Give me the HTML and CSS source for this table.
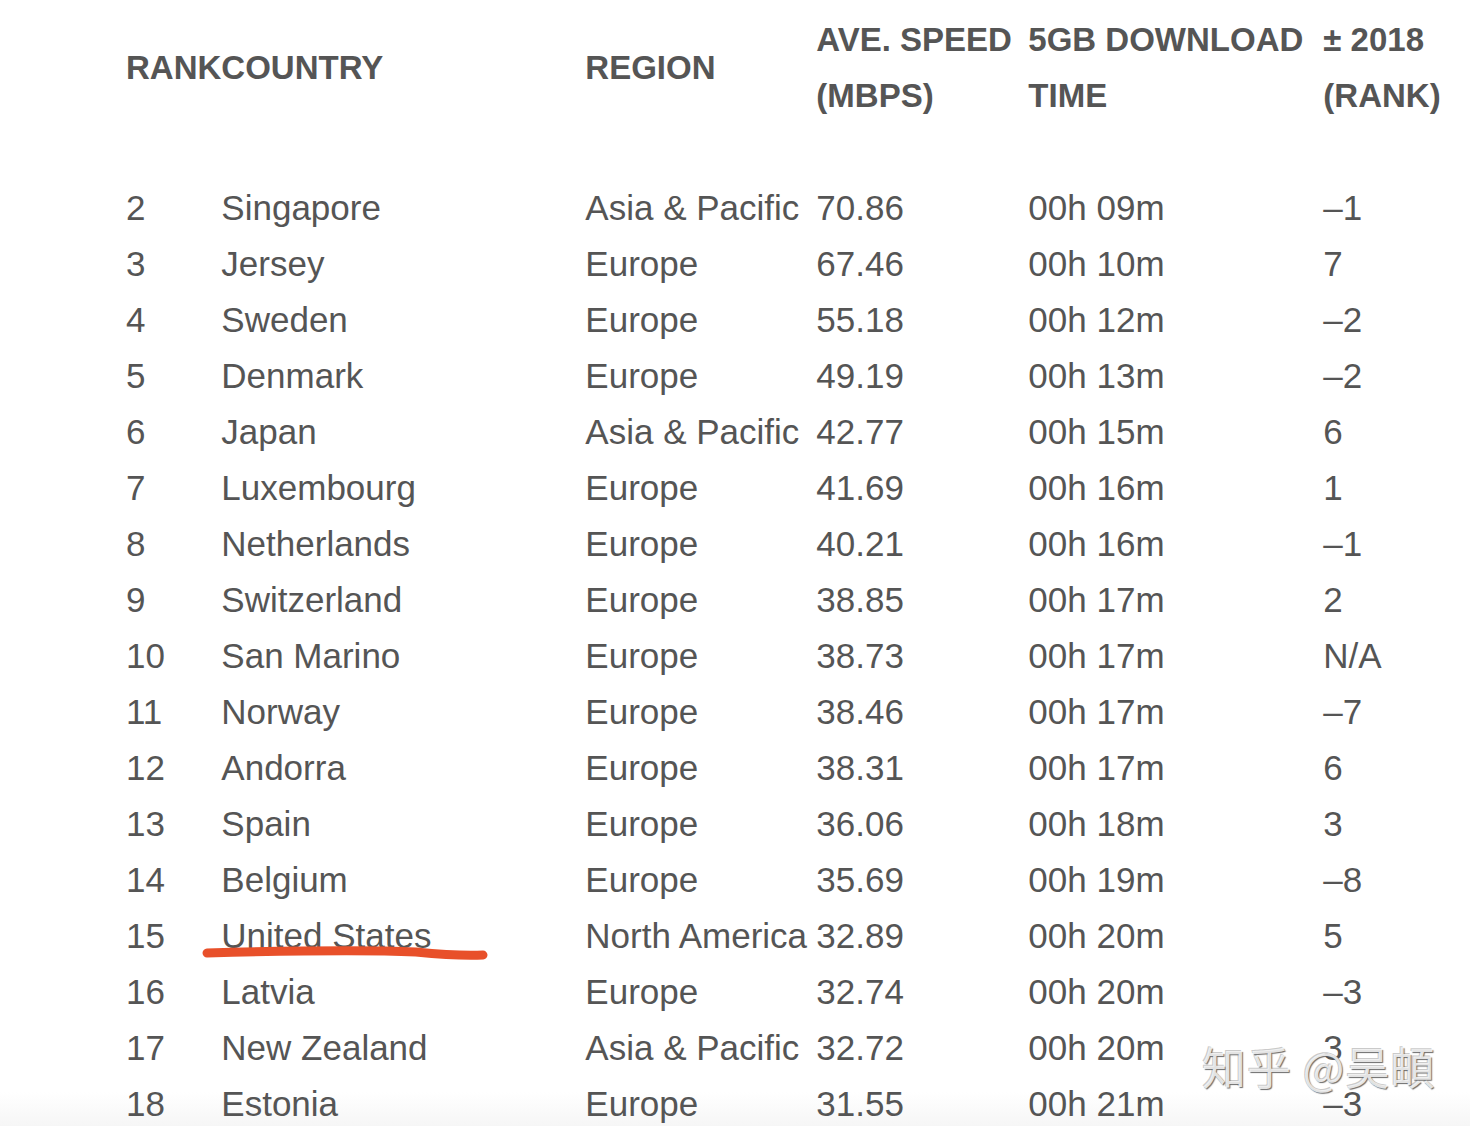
FILE: index.html
```html
<!DOCTYPE html>
<html lang="en">
<head>
<meta charset="utf-8">
<title>Internet speed ranking</title>
<link rel="stylesheet" href="styles.css">
</head>
<body>
<div class="page">
  <table class="speed">
    <thead>
      <tr>
        <th class="c-rank">RANK</th>
        <th class="c-country">COUNTRY</th>
        <th class="c-region">REGION</th>
        <th class="c-speed">AVE. SPEED (MBPS)</th>
        <th class="c-time">5GB DOWNLOAD TIME</th>
        <th class="c-change">± 2018 (RANK)</th>
      </tr>
      <tr class="spacer"><td colspan="6"></td></tr>
    </thead>
    <tbody>
      <tr><td>2</td><td>Singapore</td><td>Asia &amp; Pacific</td><td>70.86</td><td>00h 09m</td><td>–1</td></tr>
      <tr><td>3</td><td>Jersey</td><td>Europe</td><td>67.46</td><td>00h 10m</td><td>7</td></tr>
      <tr><td>4</td><td>Sweden</td><td>Europe</td><td>55.18</td><td>00h 12m</td><td>–2</td></tr>
      <tr><td>5</td><td>Denmark</td><td>Europe</td><td>49.19</td><td>00h 13m</td><td>–2</td></tr>
      <tr><td>6</td><td>Japan</td><td>Asia &amp; Pacific</td><td>42.77</td><td>00h 15m</td><td>6</td></tr>
      <tr><td>7</td><td>Luxembourg</td><td>Europe</td><td>41.69</td><td>00h 16m</td><td>1</td></tr>
      <tr><td>8</td><td>Netherlands</td><td>Europe</td><td>40.21</td><td>00h 16m</td><td>–1</td></tr>
      <tr><td>9</td><td>Switzerland</td><td>Europe</td><td>38.85</td><td>00h 17m</td><td>2</td></tr>
      <tr><td>10</td><td>San Marino</td><td>Europe</td><td>38.73</td><td>00h 17m</td><td>N/A</td></tr>
      <tr><td>11</td><td>Norway</td><td>Europe</td><td>38.46</td><td>00h 17m</td><td>–7</td></tr>
      <tr><td>12</td><td>Andorra</td><td>Europe</td><td>38.31</td><td>00h 17m</td><td>6</td></tr>
      <tr><td>13</td><td>Spain</td><td>Europe</td><td>36.06</td><td>00h 18m</td><td>3</td></tr>
      <tr><td>14</td><td>Belgium</td><td>Europe</td><td>35.69</td><td>00h 19m</td><td>–8</td></tr>
      <tr><td>15</td><td class="marked">United States<svg class="scribble" viewBox="0 0 290 20" width="290" height="20"><path d="M6 8 C 80 6, 170 5, 215 7 C 245 10, 262 11, 282 10" fill="none" stroke="#e8502a" stroke-width="9" stroke-linecap="round"/></svg></td><td>North America</td><td>32.89</td><td>00h 20m</td><td>5</td></tr>
      <tr><td>16</td><td>Latvia</td><td>Europe</td><td>32.74</td><td>00h 20m</td><td>–3</td></tr>
      <tr><td>17</td><td>New Zealand</td><td>Asia &amp; Pacific</td><td>32.72</td><td>00h 20m</td><td>3</td></tr>
      <tr><td>18</td><td>Estonia</td><td>Europe</td><td>31.55</td><td>00h 21m</td><td>–3</td></tr>
    </tbody>
  </table>
  <div class="watermark">知乎 @吴頔</div>
</div>
</body>
</html>
```

FILE: styles.css
```css
html, body {
  margin: 0;
  padding: 0;
  background: #ffffff;
}

.page {
  position: relative;
  width: 1470px;
  height: 1126px;
  overflow: hidden;
  background: linear-gradient(to bottom, #ffffff 0, #ffffff 1092px, #f6f6f6 1126px);
}

.speed {
  border-collapse: collapse;
  margin: 12px 0 0 126px;
  font-family: "Liberation Sans", Arial, Helvetica, sans-serif;
  color: #555555;
  table-layout: fixed;
}

.speed th,
.speed td {
  padding: 0;
  text-align: left;
  vertical-align: middle;
  white-space: nowrap;
}

.speed th {
  font-size: 33px;
  font-weight: bold;
  line-height: 56px;
  white-space: normal;
}

.speed .c-rank { width: 95px; }
.speed .c-country { width: 364px; }
.speed .c-region { width: 231px; }
.speed .c-speed { width: 212px; }
.speed .c-time { width: 295px; }
.speed .c-change { width: 130px; }

.speed .spacer td {
  height: 56px;
}

.speed tbody td {
  font-size: 35px;
  height: 56px;
  line-height: 56px;
}

.marked {
  position: relative;
}

.scribble {
  position: absolute;
  left: -20px;
  top: 37px;
  overflow: visible;
}

.watermark {
  position: absolute;
  left: 1202px;
  top: 1040px;
  font-family: "Noto Sans CJK SC", "Liberation Sans", sans-serif;
  font-size: 44px;
  line-height: 52px;
  letter-spacing: 1px;
  color: rgba(250, 250, 250, 0.85);
  text-shadow: 1px 1px 1px rgba(90, 90, 90, 0.9), -1px -1px 0 rgba(150, 150, 150, 0.5);
}
```
